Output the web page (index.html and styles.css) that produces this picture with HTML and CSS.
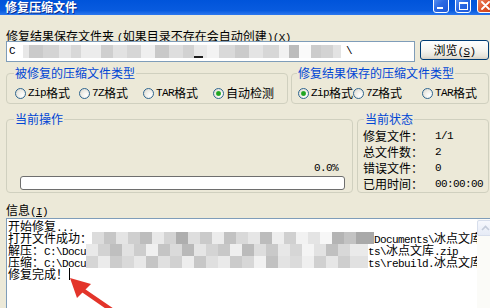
FILE: index.html
```html
<!DOCTYPE html>
<html lang="zh-CN">
<head>
<meta charset="utf-8">
<title>修复压缩文件</title>
<link rel="stylesheet" href="styles.css">
</head>
<body>
<div class="window">
  <div class="titlebar">
    <span class="title">修复压缩文件</span>
    <div class="caption-btns">
      <span class="cbtn min"><span class="min-bar"></span></span>
      <span class="cbtn max"><span class="max-box"></span></span>
      <span class="cbtn close">
        <svg class="close-x" width="9" height="9" viewBox="0 0 9 9"><path d="M1 1 L8 8 M8 1 L1 8" stroke="#fff" stroke-width="1.8" stroke-linecap="round"/></svg>
      </span>
    </div>
  </div>

  <div class="client">
    <div class="path-label">修复结果保存文件夹 <span class="m">(</span>如果目录不存在会自动创建<span class="m">)(<u>X</u>)</span></div>

    <div class="path-row">
      <div class="path-input"><span class="m">C</span><span class="mosaic mz-in"></span><span class="m bs">\</span></div>
      <button class="btn" type="button">浏览<span class="m">(<u>S</u>)</span></button>
    </div>

    <div class="group-row top-groups">
      <fieldset class="group g-src">
        <legend class="lg-src">被修复的压缩文件类型</legend>
        <div class="radios src-radios">
          <span class="radio w64"><span class="rb"></span><span class="m">Zip</span>格式</span>
          <span class="radio w64"><span class="rb"></span><span class="m">7Z</span>格式</span>
          <span class="radio w70"><span class="rb"></span><span class="m">TAR</span>格式</span>
          <span class="radio"><span class="rb on"></span>自动检测</span>
        </div>
      </fieldset>
      <fieldset class="group g-dst">
        <legend class="lg-dst">修复结果保存的压缩文件类型</legend>
        <div class="radios dst-radios">
          <span class="radio w55"><span class="rb on"></span><span class="m">Zip</span>格式</span>
          <span class="radio w69"><span class="rb"></span><span class="m">7Z</span>格式</span>
          <span class="radio"><span class="rb"></span><span class="m">TAR</span>格式</span>
        </div>
      </fieldset>
    </div>

    <div class="group-row mid-groups">
      <fieldset class="group g-op">
        <legend class="lg-op">当前操作</legend>
        <div class="op-body">
          <div class="pct"><span class="m">0.0%</span></div>
          <div class="bar"></div>
        </div>
      </fieldset>
      <fieldset class="group g-st">
        <legend class="lg-st">当前状态</legend>
        <div class="st-body">
          <span>修复文件：</span><span class="m">1/1</span>
          <span>总文件数：</span><span class="m">2</span>
          <span>错误文件：</span><span class="m">0</span>
          <span>已用时间：</span><span class="m">00:00:00</span>
        </div>
      </fieldset>
    </div>

    <div class="info-label">信息<span class="m">(<u>I</u>)</span></div>

    <div class="log">
      <div class="log-text">
        <div class="ln">开始修复<span class="m">...</span></div>
        <div class="ln">打开文件成功：<span class="mosaic mz-a"></span><span class="m">Documents\</span>冰点文库<span class="m">\</span></div>
        <div class="ln">解压：<span class="m">C:\Docu</span><span class="mosaic mz-b"></span><span class="m">ts\</span>冰点文库<span class="m">.zip</span></div>
        <div class="ln">压缩：<span class="m">C:\Docu</span><span class="mosaic mz-c"></span><span class="m">ts\rebuild.</span>冰点文库<span class="m">.zip</span></div>
        <div class="ln">修复完成！<span class="caret"></span></div>
      </div>
      <div class="vscroll">
        <span class="sb-up">
          <svg width="9" height="6" viewBox="0 0 9 6"><path d="M1 5 L4.5 1.5 L8 5" fill="none" stroke="#C3CBDA" stroke-width="1.6"/></svg>
        </span>
      </div>
    </div>
  </div>

  <svg class="arrow" width="490" height="308" viewBox="0 0 490 308">
    <line x1="84" y1="291" x2="116" y2="313" stroke="#E3342A" stroke-width="4.5" stroke-linecap="round"/>
    <polygon points="70,278 77,298 91,284" fill="#E3342A"/>
  </svg>
</div>
</body>
</html>
```

FILE: styles.css
```css
* { box-sizing: border-box; }

html, body {
  margin: 0;
  padding: 0;
}

body {
  background: #ECE9D8;
  font: 12px/14px "Noto Sans CJK SC", "Noto Sans", sans-serif;
  color: #000;
}

.window {
  position: relative;
  width: 490px;
  height: 308px;
  overflow: hidden;
  background: #ECE9D8;
}

/* ---------- title bar ---------- */
.titlebar {
  display: flex;
  justify-content: space-between;
  align-items: flex-start;
  height: 15px;
  background: linear-gradient(180deg, #0054DA 0%, #085BDF 70%, #2C78EE 100%);
}

.title {
  color: #fff;
  font-weight: bold;
  line-height: 13px;
  padding-left: 5px;
  text-shadow: 1px 1px 0 #0B2C8A;
}

.caption-btns {
  display: flex;
  gap: 6px;
  margin-top: -8px;
  margin-right: -8px;
}

.cbtn {
  display: flex;
  width: 16px;
  height: 21px;
  border: 1px solid #fff;
  border-radius: 3px;
  background: linear-gradient(135deg, #6FA6FA 0%, #2A68E2 55%, #1E58D6 100%);
}

.cbtn.min {
  align-items: flex-end;
  padding: 0 0 3px 3px;
}

.min-bar {
  width: 6px;
  height: 2px;
  background: #fff;
}

.cbtn.max {
  align-items: flex-end;
  justify-content: center;
  padding-bottom: 2px;
}

.max-box {
  width: 9px;
  height: 8px;
  border: 1px solid #fff;
  border-top-width: 2px;
}

.cbtn.close {
  width: 21px;
  align-items: flex-end;
  padding: 0 0 2px 3px;
  background: linear-gradient(135deg, #F3A184 0%, #DD5228 55%, #C73F17 100%);
}

/* ---------- client area ---------- */
.m {
  font-family: "Liberation Mono", monospace;
  font-size: 11px;
  line-height: 1;
  letter-spacing: -0.6px;
}

.path-label {
  height: 14px;
  margin: 14px 0 0 6px;
  line-height: 14px;
  white-space: nowrap;
}

.path-row {
  display: flex;
  align-items: flex-start;
  gap: 5px;
  margin-top: -3px;
  padding-left: 6px;
}

.path-input {
  display: flex;
  align-items: center;
  width: 409px;
  height: 21px;
  margin-top: 1px;
  padding-left: 2px;
  border: 1px solid #7F9DB9;
  background: #fff;
  white-space: nowrap;
}

.mosaic {
  display: inline-block;
  vertical-align: top;
}

.mz-in {
  width: 318px;
  height: 13px;
  margin-left: 8px;
  background:
    linear-gradient(#1e1e1e, #1e1e1e) 171px 11px / 9px 2px no-repeat,
    linear-gradient(90deg, #e8e8e8 0 6px, #cacaca 6px 20px, #d4d4d4 20px 36px, #e6e6e6 36px 48px,
      #d8d8d8 48px 58px, #ececec 58px 78px, #cfcfcf 78px 90px, #e2e2e2 90px 104px,
      #d6d6d6 104px 118px, #efefef 118px 132px, #c9c9c9 132px 146px, #dedede 146px 160px,
      #d2d2d2 160px 171px, #e9e9e9 171px 184px, #f3f3f3 184px 196px, #d9d9d9 196px 212px,
      #cbcbcb 212px 226px, #e4e4e4 226px 240px, #d7d7d7 240px 256px, #f1f1f1 256px 266px,
      #bcbcbc 266px 276px, #fafafa 276px 288px, #cccccc 288px 298px, #d3d3d3 298px 310px,
      #e3e3e3 310px 318px);
}

.bs { margin-left: 5px; }

.btn {
  width: 69px;
  height: 20px;
  padding: 0;
  border: 1px solid #003C74;
  border-radius: 3px;
  background: linear-gradient(180deg, #FFFFFF 0%, #F4F3EE 55%, #E6E3DA 85%, #D6D0C5 100%);
  font: inherit;
  line-height: 18px;
  color: #000;
}

/* ---------- group boxes ---------- */
.group-row {
  display: flex;
  padding-left: 6px;
}

.top-groups {
  margin-top: 4px;
  gap: 3px;
}

.mid-groups {
  margin-top: 8px;
  gap: 4px;
}

.group {
  margin: 0;
  padding: 0;
  min-width: 0;
  border: 1px solid #D0D0BF;
  border-radius: 4px;
}

.group legend {
  color: #0046D5;
  padding: 0 1px;
  line-height: 14px;
  margin-left: 7px;
}

.group .lg-dst { margin-left: 5px; }
.group .lg-st { margin-left: 6px; }

.g-src { width: 282px; }
.g-dst { width: 198px; }
.g-op { width: 347px; }
.g-st { width: 132px; }

.radios {
  display: flex;
  padding: 6px 0 3px 8px;
  white-space: nowrap;
}

.dst-radios { padding-left: 6px; }

.radio {
  display: flex;
  align-items: center;
  height: 14px;
}

.w64 { width: 64px; }
.w70 { width: 70px; }
.w55 { width: 55px; }
.w69 { width: 69px; }

.rb {
  flex: none;
  width: 11px;
  height: 11px;
  margin-right: 2px;
  border: 1px solid #2F6690;
  border-radius: 50%;
  background: radial-gradient(circle at 70% 70%, #FFFFFF 0%, #F2F1EC 40%, #D8D6CC 100%);
}

.rb.on {
  background:
    radial-gradient(circle, #22A322 0 1.8px, #6CCB6C 2.4px, rgba(255,255,255,0) 3px),
    radial-gradient(circle at 70% 70%, #FFFFFF 0%, #F2F1EC 40%, #D8D6CC 100%);
}

.op-body {
  display: flex;
  flex-direction: column;
  padding: 33px 7px 1px 13px;
}

.pct {
  height: 14px;
  text-align: right;
  padding-right: 7px;
  line-height: 14px;
}

.bar {
  height: 14px;
  margin-top: 3px;
  border: 1px solid #6E6E6E;
  border-radius: 3px;
  background: #fff;
}

.st-body {
  display: grid;
  grid-template-columns: 72px auto;
  padding: 2px 0 0 5px;
  white-space: nowrap;
}

.st-body > span {
  height: 16px;
  line-height: 16px;
}

/* ---------- info log ---------- */
.info-label {
  height: 14px;
  margin-top: 10px;
  padding-left: 6px;
  line-height: 14px;
}

.log {
  display: flex;
  width: 489px;
  height: 100px;
  margin: 1px 0 0 6px;
  border: 1px solid #7F9DB9;
  background: #fff;
}

.log-text {
  flex: 1;
  min-width: 0;
  overflow: hidden;
  padding: 1px 0 0 1px;
  white-space: nowrap;
}

.ln {
  height: 12px;
  line-height: 12px;
}

.mz-a, .mz-b, .mz-c {
  width: 282px;
  height: 12px;
}

.mz-a {
  background: linear-gradient(90deg, #dcdcdc 0 12px, #c6c6c6 12px 24px, #e4e4e4 24px 36px, #cfcfcf 36px 48px,
    #bdbdbd 48px 60px, #e9e9e9 60px 72px, #d3d3d3 72px 84px, #aeaeae 84px 96px, #dedede 96px 108px,
    #cacaca 108px 120px, #ececec 120px 132px, #c2c2c2 132px 144px, #d9d9d9 144px 156px,
    #e6e6e6 156px 168px, #bcbcbc 168px 180px, #eeeeee 180px 192px, #d0d0d0 192px 204px,
    #f2f2f2 204px 216px, #e4e4e4 216px 228px, #f7f7f7 228px 240px, #b4b4b4 240px 252px,
    #c3c3c3 252px 264px, #a9a9a9 264px 282px);
}

.mz-b {
  background: linear-gradient(90deg, #e9e9e9 0 12px, #d2d2d2 12px 24px, #bfbfbf 24px 36px, #e1e1e1 36px 48px,
    #cdcdcd 48px 60px, #f0f0f0 60px 72px, #c4c4c4 72px 84px, #dadada 84px 96px, #b9b9b9 96px 108px,
    #e5e5e5 108px 120px, #d4d4d4 120px 132px, #c8c8c8 132px 144px, #efefef 144px 156px,
    #bbbbbb 156px 168px, #dddddd 168px 180px, #c9c9c9 180px 192px, #e7e7e7 192px 204px,
    #d6d6d6 204px 216px, #f4f4f4 216px 228px, #e2e2e2 228px 240px, #c0c0c0 240px 252px,
    #d8d8d8 252px 264px, #eaeaea 264px 282px);
}

.mz-c {
  background: linear-gradient(90deg, #d5d5d5 0 12px, #ebebeb 12px 24px, #cccccc 24px 36px, #d9d9d9 36px 48px,
    #e8e8e8 48px 60px, #c5c5c5 60px 72px, #e0e0e0 72px 84px, #d1d1d1 84px 96px, #ededed 96px 108px,
    #c7c7c7 108px 120px, #dfdfdf 120px 132px, #eaeaea 132px 144px, #cbcbcb 144px 156px,
    #d7d7d7 156px 168px, #f1f1f1 168px 180px, #c1c1c1 180px 192px, #e3e3e3 192px 204px,
    #dbdbdb 204px 216px, #efefef 216px 228px, #d0d0d0 228px 240px, #e6e6e6 240px 252px,
    #cecece 252px 264px, #e1e1e1 264px 282px);
}

.caret {
  display: inline-block;
  vertical-align: top;
  width: 1px;
  height: 12px;
  margin-left: 1px;
  background: #000;
}

.vscroll {
  flex: none;
  width: 17px;
  background: #FBFBF8;
}

.sb-up {
  display: flex;
  align-items: center;
  justify-content: center;
  height: 16px;
  margin-top: 1px;
  border: 1px solid #D7DEEC;
  border-radius: 2px;
  background: linear-gradient(180deg, #F6F8FD, #E6EBF6);
}

/* ---------- annotation arrow ---------- */
.arrow {
  position: absolute;
  left: 0;
  top: 0;
  pointer-events: none;
}
```
